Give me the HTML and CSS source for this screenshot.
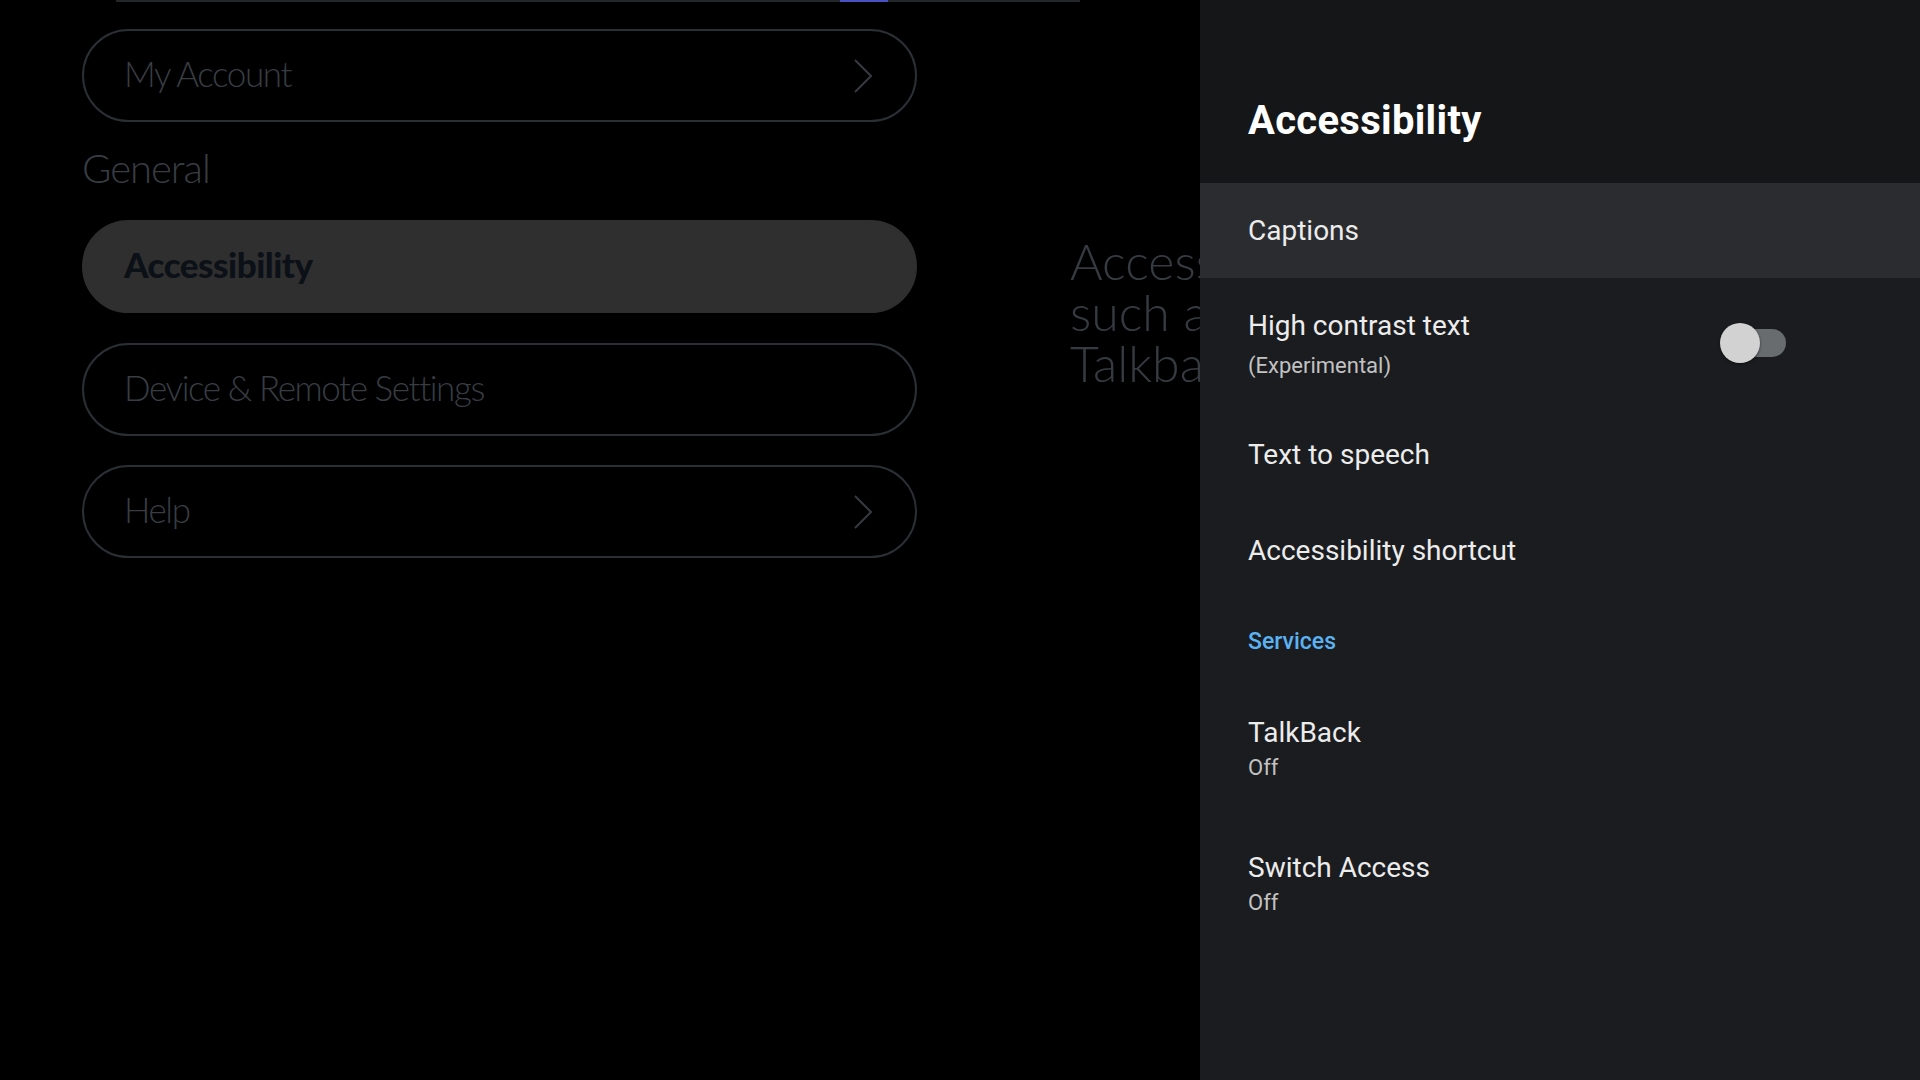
FILE: index.html
```html
<!DOCTYPE html>
<html lang="en">
<head>
<meta charset="utf-8">
<title>Settings - Accessibility</title>
<link rel="stylesheet" href="styles.css">
</head>
<body>
<div class="screen">
  <div class="backdrop">
    <div class="progress"><div class="progress-track"><div class="progress-fill"></div></div></div>
    <div class="content">
      <nav class="nav">
        <div class="pill">
          <span class="pill-label">My Account</span>
          <svg class="chev" viewBox="0 0 20 36" width="20" height="36"><polyline points="2,2 18,18 2,34" fill="none" stroke="#363b41" stroke-width="2"/></svg>
        </div>
        <div class="section">General</div>
        <div class="pill pill-focused">
          <span class="pill-label">Accessibility</span>
        </div>
        <div class="pill">
          <span class="pill-label">Device &amp; Remote Settings</span>
        </div>
        <div class="pill">
          <span class="pill-label">Help</span>
          <svg class="chev" viewBox="0 0 20 36" width="20" height="36"><polyline points="2,2 18,18 2,34" fill="none" stroke="#363b41" stroke-width="2"/></svg>
        </div>
      </nav>
      <p class="desc">Accessibility settings<br>such as captions and<br>Talkback.</p>
    </div>
  </div>
  <aside class="panel">
    <header class="panel-head"><h1 class="panel-title">Accessibility</h1></header>
    <div class="row row-active"><div class="row-title">Captions</div></div>
    <div class="row row-two row-toggle">
      <div class="row-text">
        <div class="row-title">High contrast text</div>
        <div class="row-sub">(Experimental)</div>
      </div>
      <div class="toggle"><div class="toggle-track"></div><div class="toggle-thumb"></div></div>
    </div>
    <div class="row"><div class="row-title">Text to speech</div></div>
    <div class="row"><div class="row-title">Accessibility shortcut</div></div>
    <div class="row-header">Services</div>
    <div class="row row-tall">
      <div class="row-title">TalkBack</div>
      <div class="row-sub">Off</div>
    </div>
    <div class="row row-tall">
      <div class="row-title">Switch Access</div>
      <div class="row-sub">Off</div>
    </div>
  </aside>
</div>
</body>
</html>
```
FILE: styles.css
```css
* { box-sizing: border-box; }
html, body { margin: 0; padding: 0; }
body {
  background: #000;
  width: 1920px;
  height: 1080px;
  overflow: hidden;
}
.screen {
  display: flex;
  width: 1920px;
  height: 1080px;
}
.backdrop {
  width: 1200px;
  height: 1080px;
  overflow: hidden;
  display: flex;
  flex-direction: column;
}
.progress {
  padding-left: 116px;
}
.progress-track {
  width: 964px;
  height: 2px;
  background: #24272a;
  position: relative;
}
.progress-fill {
  position: absolute;
  left: 724px;
  top: 0;
  width: 48px;
  height: 2px;
  background: #4a4fc4;
}
.content {
  display: flex;
  padding-top: 27px;
}
.nav {
  margin-left: 82px;
  width: 835px;
  flex: none;
  display: flex;
  flex-direction: column;
  font-family: Lato, "Open Sans", sans-serif;
}
.pill {
  height: 93px;
  border: 2px solid #2a2f34;
  border-radius: 47px;
  display: flex;
  align-items: center;
  justify-content: space-between;
  padding: 0 42px 6px 40px;
  margin-bottom: 29px;
}
.chev { flex: none; margin-top: 6px; }
.pill-label {
  font-size: 35px;
  font-weight: 300;
  color: #383d43;
  letter-spacing: -1.4px;
}
.pill-focused {
  background: #2f2f2f;
  border-color: #2f2f2f;
  margin-bottom: 30px;
}
.pill-focused .pill-label {
  font-weight: 900;
  color: #0c1017;
  letter-spacing: -0.5px;
}
.section {
  height: 98px;
  margin-top: -29px;
  display: flex;
  align-items: center;
  font-size: 40px;
  font-weight: 300;
  color: #383d43;
  letter-spacing: -1px;
  padding-bottom: 6px;
}
.desc {
  margin: 207px 0 0 153px;
  flex: none;
  white-space: nowrap;
  font-family: Lato, "Open Sans", sans-serif;
  font-weight: 300;
  font-size: 50px;
  line-height: 51px;
  color: #363b41;
}
.panel {
  width: 720px;
  height: 1080px;
  background: #1b1c1f;
  font-family: Roboto, "Noto Sans", sans-serif;
  display: flex;
  flex-direction: column;
}
.panel-head {
  height: 183px;
  background: #151618;
  padding: 97px 48px 0;
}
.panel-title {
  margin: 0;
  font-size: 40px;
  line-height: 48px;
  font-weight: 700;
  color: #ffffff;
  letter-spacing: 0.3px;
}
.row {
  height: 96px;
  padding: 0 48px;
  display: flex;
  flex-direction: column;
  justify-content: center;
}
.row-active {
  height: 95px;
  background: #2b2c2f;
}
.row-two {
  height: 129px;
}
.row-toggle {
  flex-direction: row;
  align-items: center;
  justify-content: space-between;
  padding-right: 134px;
}
.row-text { padding-top: 6px; }
.row-tall {
  height: 135px;
  padding-top: 5px;
}
.row-title {
  font-size: 28px;
  line-height: 34px;
  color: #ececec;
}
.row-sub {
  font-size: 22px;
  line-height: 34px;
  margin-top: 1px;
  color: #c2c2c2;
}
.row-text .row-sub { margin-top: 6px; }
.row-header {
  height: 81px;
  padding: 4px 48px 0;
  display: flex;
  align-items: center;
  font-size: 23px;
  font-weight: 500;
  color: #5ab2f2;
}
.toggle {
  position: relative;
  width: 66px;
  height: 40px;
}
.toggle-track {
  position: absolute;
  left: 8px;
  top: 6px;
  width: 58px;
  height: 28px;
  border-radius: 14px;
  background: #696c6f;
}
.toggle-thumb {
  position: absolute;
  left: 0;
  top: 0;
  width: 40px;
  height: 40px;
  border-radius: 50%;
  background: #d2d2d2;
  box-shadow: 0 1px 3px rgba(0,0,0,0.5);
}
```
